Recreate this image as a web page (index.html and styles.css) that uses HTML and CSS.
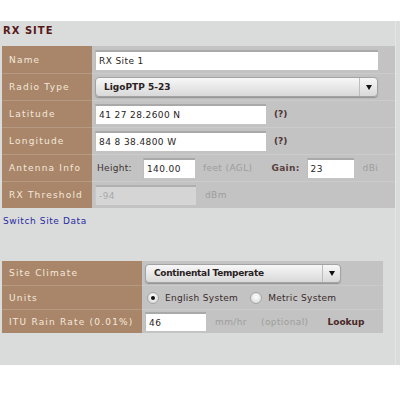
FILE: index.html
```html
<!DOCTYPE html>
<html>
<head>
<meta charset="utf-8">
<link rel="stylesheet" href="styles.css">
</head>
<body>
<div class="panel">
  <div class="panel-inner">
    <h2 class="title">RX SITE</h2>
    <div class="grid grid-top">
      <div class="row">
        <div class="label">Name</div>
        <div class="value"><div class="input w-name">RX Site 1</div></div>
      </div>
      <div class="row">
        <div class="label">Radio Type</div>
        <div class="value">
          <div class="select w-radio"><span class="sel-text">LigoPTP 5-23</span><span class="sel-arrow"><i class="tri"></i></span></div>
        </div>
      </div>
      <div class="row">
        <div class="label">Latitude</div>
        <div class="value"><div class="input w-coord">41 27 28.2600 N</div><span class="help">(?)</span></div>
      </div>
      <div class="row">
        <div class="label">Longitude</div>
        <div class="value"><div class="input w-coord">84 8 38.4800 W</div><span class="help">(?)</span></div>
      </div>
      <div class="row">
        <div class="label">Antenna Info</div>
        <div class="value">
          <span class="field-lbl">Height:</span>
          <div class="input w-height">140.00</div>
          <span class="unit u-feet">feet (AGL)</span>
          <span class="field-lbl bold g-gain">Gain:</span>
          <div class="input w-gain">23</div>
          <span class="unit u-dbi">dBi</span>
        </div>
      </div>
      <div class="row">
        <div class="label">RX Threshold</div>
        <div class="value"><div class="input disabled w-thresh">-94</div><span class="unit u-dbm">dBm</span></div>
      </div>
    </div>
    <a class="switch" href="#">Switch Site Data</a>
    <div class="grid grid-bottom">
      <div class="row row-s">
        <div class="label">Site Climate</div>
        <div class="value">
          <div class="select w-climate"><span class="sel-text">Continental Temperate</span><span class="sel-arrow"><i class="tri"></i></span></div>
        </div>
      </div>
      <div class="row row-s">
        <div class="label">Units</div>
        <div class="value">
          <span class="radio checked"></span><span class="radio-lbl r-eng">English System</span>
          <span class="radio"></span><span class="radio-lbl">Metric System</span>
        </div>
      </div>
      <div class="row row-s">
        <div class="label">ITU Rain Rate (0.01%)</div>
        <div class="value">
          <div class="input w-rain">46</div>
          <span class="unit u-mm">mm/hr</span>
          <span class="unit u-opt">(optional)</span>
          <span class="lookup">Lookup</span>
        </div>
      </div>
    </div>
  </div>
</div>
</body>
</html>
```
FILE: styles.css
```css
html, body {
  margin: 0;
  padding: 0;
  background: #ffffff;
}
body {
  font-family: "DejaVu Sans", Verdana, sans-serif;
  font-size: 9px;
  color: #2e2626;
}
.panel {
  margin-top: 21px;
  height: 344px;
  background: #d9dcdb;
}
.panel-inner {
  width: 393px;
  height: 100%;
  padding-left: 2px;
  border-right: 1px solid #e4e6e5;
}
.title {
  margin: 0;
  height: 25px;
  box-sizing: border-box;
  padding: 3px 0 0 1px;
  line-height: 14px;
  font-size: 10px;
  font-weight: bold;
  letter-spacing: 1px;
  color: #581818;
}
.grid {
  display: flex;
  flex-direction: column;
}
.grid-bottom {
  width: 381px;
  margin-top: 34px;
}
.row {
  display: grid;
  grid-template-columns: 90px 1fr;
  height: 27px;
}
.grid-bottom .row {
  grid-template-columns: 140px 1fr;
  height: 24px;
}
.label {
  background: #a98669;
  color: #f4e8dc;
  letter-spacing: 1.2px;
  padding-left: 7px;
  display: flex;
  align-items: center;
}
.value {
  background: #c3c3c3;
  display: flex;
  align-items: center;
  padding-left: 3px;
}
.row + .row .label {
  border-top: 1px solid #b59a82;
}
.row + .row .value {
  border-top: 1px solid #cbcbcb;
}
.input {
  box-sizing: border-box;
  height: 20px;
  background: #ffffff;
  border-top: 2px solid #a9a9a9;
  border-left: 1px solid #bdbdbd;
  padding-left: 3px;
  display: flex;
  align-items: center;
  letter-spacing: 0.4px;
  color: #2a2424;
}
.input.disabled {
  background: #d5d5d5;
  color: #a9a9a9;
  border-top-color: #b0b0b0;
  border-left-color: #c8c8c8;
}
.w-name { width: 283px; }
.w-coord { width: 171px; }
.w-height { width: 52px; margin-left: 11px; }
.w-gain { width: 47px; margin-left: 7px; }
.w-thresh { width: 101px; }
.w-rain { width: 61px; height: 19px; }
.help {
  margin-left: 8px;
  font-weight: bold;
  color: #4e3434;
}
.field-lbl {
  color: #3e3232;
  letter-spacing: 0.3px;
  margin-left: 2px;
}
.field-lbl.bold {
  font-weight: bold;
  color: #5a4040;
}
.g-gain { margin-left: 19px; }
.unit {
  color: #9d9d9d;
  letter-spacing: 0.4px;
}
.u-feet { margin-left: 8px; }
.u-dbi { margin-left: 9px; }
.u-dbm { margin-left: 9px; }
.u-mm { margin-left: 9px; }
.u-opt { margin-left: 14px; }
.select {
  box-sizing: border-box;
  height: 20px;
  display: flex;
  align-items: stretch;
  border: 1px solid #a3a3a3;
  border-radius: 4px;
  background: linear-gradient(#f7f7f7, #d9d9d9);
  box-shadow: 0 1px 1px rgba(0, 0, 0, 0.25);
}
.w-radio { width: 283px; }
.w-climate { width: 196px; height: 19px; }
.sel-text {
  flex: 1;
  display: flex;
  align-items: center;
  padding-left: 8px;
  font-weight: bold;
  color: #2a2222;
}
.w-climate .sel-text { padding-left: 8px; letter-spacing: -0.3px; }
.sel-arrow {
  width: 17px;
  border-left: 1px solid #bdbdbd;
  display: flex;
  align-items: center;
  justify-content: center;
}
.tri {
  width: 0;
  height: 0;
  border-left: 3px solid transparent;
  border-right: 3px solid transparent;
  border-top: 5px solid #111111;
}
.radio {
  box-sizing: border-box;
  width: 12px;
  height: 12px;
  margin-left: 2px;
  border-radius: 50%;
  border: 1px solid #a5a5a5;
  background: radial-gradient(circle at 50% 40%, #ffffff, #d2d2d2);
  display: flex;
  align-items: center;
  justify-content: center;
}
.radio.checked::after {
  content: "";
  width: 4px;
  height: 4px;
  border-radius: 50%;
  background: #111111;
}
.radio-lbl {
  margin-left: 6px;
  letter-spacing: 0.3px;
  color: #3a2a2a;
}
.r-eng { margin-right: 10px; }
.lookup {
  margin-left: 19px;
  font-weight: bold;
  color: #4a2828;
}
.switch {
  display: block;
  padding-top: 7px;
  height: 12px;
  line-height: 12px;
  color: #2b2ba2;
  text-decoration: none;
  letter-spacing: 0.6px;
  padding-left: 1px;
}
```
